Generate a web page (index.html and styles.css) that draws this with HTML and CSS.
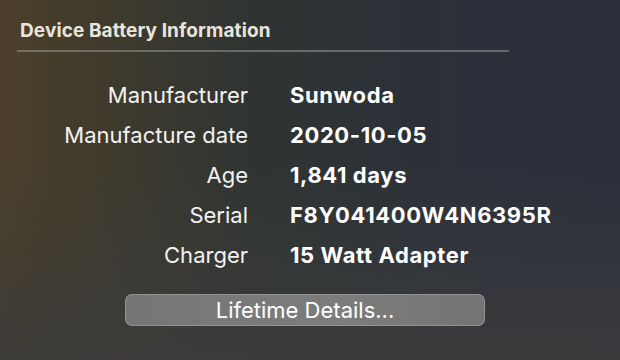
FILE: index.html
```html
<!DOCTYPE html>
<html lang="en">
<head>
    <meta charset="UTF-8">
    <meta name="viewport" content="width=device-width, initial-scale=1.0">
    <title>Device Battery Information</title>
    <link rel="stylesheet" href="styles.css">
</head>
<body>
    <div class="painel">
        <div class="titulo">Device Battery Information</div>
        <div class="linha"></div>
        <div class="tabela">
            <div class="rotulo">Manufacturer</div>
            <div class="valor">Sunwoda</div>
            <div class="rotulo">Manufacture date</div>
            <div class="valor">2020-10-05</div>
            <div class="rotulo">Age</div>
            <div class="valor">1,841 days</div>
            <div class="rotulo">Serial</div>
            <div class="valor">F8Y041400W4N6395R</div>
            <div class="rotulo">Charger</div>
            <div class="valor">15 Watt Adapter</div>
        </div>
        <div class="acoes">
            <button class="botao">Lifetime Details...</button>
        </div>
    </div>
</body>
</html>
```
FILE: styles.css
```css
html, body {
    height: 100%;
}
body {
    margin: 0;
    font-family: Inter, "Liberation Sans", sans-serif;
    color: #f4f2ee;
    background:
        linear-gradient(to bottom, rgba(60, 60, 60, 0) 45%, rgba(60, 60, 60, 0.85) 100%),
        linear-gradient(to right, #4c402a 0%, #403b2c 15%, #2f3432 40%, #2b303a 75%, #2a2f3b 100%);
    overflow: hidden;
}
.painel {
    padding: 18px 0 0 17px;
    width: 492px;
}
.titulo {
    font-size: 19px;
    font-weight: bold;
    color: #e9e5dc;
    padding-left: 3px;
    line-height: 26px;
    letter-spacing: 0.1px;
}
.linha {
    border-top: 2px solid rgba(150, 150, 150, 0.55);
    margin-top: 6px;
}
.tabela {
    display: grid;
    grid-template-columns: 231px auto;
    column-gap: 42px;
    row-gap: 12px;
    margin-top: 29px;
    font-size: 22px;
    line-height: 28px;
}
.rotulo {
    text-align: right;
}
.valor {
    font-weight: bold;
    color: #ffffff;
    letter-spacing: 0.6px;
}
.acoes {
    margin-top: 25px;
    padding-left: 108px;
}
.botao {
    width: 360px;
    height: 32px;
    border: 1px solid rgba(200, 200, 200, 0.35);
    border-radius: 7px;
    background: linear-gradient(to right, #767676, #7c7c7c 60%, #747474);
    color: #ffffff;
    font-family: Inter, "Liberation Sans", sans-serif;
    font-size: 22px;
    padding: 0;
    line-height: 30px;
}
```
